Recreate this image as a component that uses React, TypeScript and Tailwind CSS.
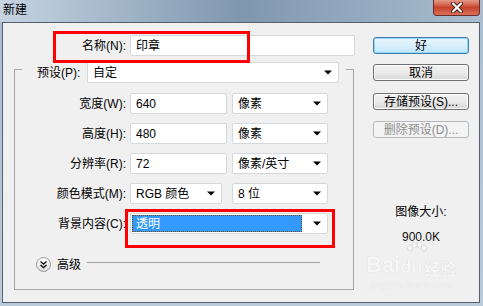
import { ReactNode } from 'react';

const font = "font-['Liberation_Sans','Noto_Sans_CJK_SC',sans-serif]";

function Arrow() {
  return (
    <svg width="8" height="5" viewBox="0 0 8 5" className="shrink-0">
      <path d="M0 0.5h8L4 4.5z" fill="#000" />
    </svg>
  );
}

function Field({ value, w }: { value: string; w: string }) {
  return (
    <div className={`${w} h-[21px] bg-white border border-[#d4d9de] rounded-[2px] flex items-center pl-[5px] text-[12px] text-black`}>
      {value}
    </div>
  );
}

function Select({ value, w, selected }: { value: string; w: string; selected?: boolean }) {
  return (
    <div className={`${w} h-[21px] bg-white border border-[#d4d9de] rounded-[2px] flex items-center pr-[6px] text-[12px] text-black`}>
      {selected ? (
        <div className="flex-1 ml-[1px] mr-[11px] h-[17px] bg-[#3399ff] border border-dotted border-[#7a4a10] flex items-center pl-[3px] text-white">
          {value}
        </div>
      ) : (
        <span className="flex-1 pl-[5px]">{value}</span>
      )}
      <Arrow />
    </div>
  );
}

function Row({ label, children }: { label: string; children: ReactNode }) {
  return (
    <div className="flex items-center h-[21px] mt-[9px] relative">
      <span className="w-[111px] text-right text-[12px] text-black">{label}</span>
      <div className="ml-[4px] flex items-center">{children}</div>
    </div>
  );
}

function Button({ label, primary, disabled }: { label: string; primary?: boolean; disabled?: boolean }) {
  const look = disabled
    ? 'border-[#b5b9bd] bg-[#f4f4f4] text-[#8d8d8d]'
    : primary
      ? 'border-[#3c7fb1] bg-gradient-to-b from-[#eaf6fd] via-[#d9f0fc] to-[#bee6fd] text-black shadow-[inset_0_0_0_1px_#9ad3f5]'
      : 'border-[#707070] bg-gradient-to-b from-[#f2f2f2] via-[#ebebeb] to-[#d6d6d6] text-black shadow-[inset_0_0_0_1px_#fcfcfc]';
  return (
    <div className={`w-[96px] h-[17px] border rounded-[3px] flex items-center justify-center text-[12px] leading-none ${look}`}>
      {label}
    </div>
  );
}

export default function App() {
  return (
    <div className={`w-[483px] h-[306px] overflow-hidden bg-gradient-to-b from-[#a9bdd2] to-[#b9cadb] ${font}`}>
      {/* title bar */}
      <div className="relative h-[22px] bg-gradient-to-r from-[#c6d4e2] via-[#7f97af] to-[#aabdd0] flex items-start">
        <span className="ml-[3px] mt-[3px] text-[12px] leading-[14px] text-black">新建</span>
        <div className="absolute right-[3px] top-0 w-[47px] h-[16px] rounded-b-[4px] border border-t-0 border-[#6e2b20] bg-gradient-to-b from-[#e49a88] via-[#c7432c] to-[#d7705a] flex items-center justify-center">
          <svg width="14" height="11" viewBox="0 0 14 11">
            <path d="M3 1.5l8 8M11 1.5l-8 8" stroke="#4a1a12" strokeWidth="4" strokeLinecap="round" />
            <path d="M3 1.5l8 8M11 1.5l-8 8" stroke="#fff" strokeWidth="2.2" strokeLinecap="round" />
          </svg>
        </div>
      </div>

      {/* client area */}
      <div className="relative ml-[2px] w-[478px] h-[281px] border border-[#55606b] bg-[#f0f0f0] flex">
        {/* left column */}
        <div className="w-[356px] flex flex-col">
          <div className="relative mt-[12px] flex items-center h-[21px]">
            <span className="w-[123px] text-right text-[12px] text-black">名称(N):</span>
            <div className="ml-[4px]">
              <Field value="印章" w="w-[225px]" />
            </div>
            <div className="absolute left-[50px] top-[-4px] w-[197px] h-[32px] border-[3px] border-[#ff0000]" />
          </div>

          {/* group box */}
          <div className="ml-[11px] mt-[13px] w-[340px] h-[221px] border border-[#a9a9a9] flex flex-col">
            <div className="-mt-[8px] ml-[7px] w-[324px] h-[21px] bg-[#f0f0f0] flex items-center">
              <span className="pl-[15px] text-[12px] text-black">预设(P):</span>
              <div className="ml-auto mr-[7px]">
                <Select value="自定" w="w-[252px]" />
              </div>
            </div>
            <div className="mt-[1px]" />
            <Row label="宽度(W):">
              <Field value="640" w="w-[97px]" />
              <div className="ml-[5px]"><Select value="像素" w="w-[96px]" /></div>
            </Row>
            <Row label="高度(H):">
              <Field value="480" w="w-[97px]" />
              <div className="ml-[5px]"><Select value="像素" w="w-[96px]" /></div>
            </Row>
            <Row label="分辨率(R):">
              <Field value="72" w="w-[97px]" />
              <div className="ml-[5px]"><Select value="像素/英寸" w="w-[96px]" /></div>
            </Row>
            <Row label="颜色模式(M):">
              <Select value="RGB 颜色" w="w-[92px]" />
              <div className="ml-[10px]"><Select value="8 位" w="w-[96px]" /></div>
            </Row>
            <Row label="背景内容(C):">
              <Select value="透明" w="w-[198px]" selected />
              <div className="absolute left-[110px] top-[-4px] w-[210px] h-[39px] border-[3px] border-[#ff0000]" />
            </Row>

            {/* advanced */}
            <div className="mt-[23px] h-[15px] flex items-center">
              <div className="ml-[21px] w-[15px] h-[15px] rounded-full border border-[#9a9a9a] bg-gradient-to-b from-white to-[#dcdcdc] flex items-center justify-center">
                <svg width="9" height="9" viewBox="0 0 9 9">
                  <path d="M1.5 1.5l3 2.5 3-2.5M1.5 5l3 2.5 3-2.5" fill="none" stroke="#111" strokeWidth="1.4" />
                </svg>
              </div>
              <span className="ml-[6px] text-[12px] text-black">高级</span>
              <div className="ml-[6px] -mt-[4px] w-[233px] h-px bg-[#a0a0a0]" />
            </div>
          </div>
        </div>

        {/* right column */}
        <div className="ml-[14px] w-[96px] flex flex-col items-center">
          <div className="mt-[14px]"><Button label="好" primary /></div>
          <div className="mt-[10px]"><Button label="取消" /></div>
          <div className="mt-[12px]"><Button label="存储预设(S)..." /></div>
          <div className="mt-[11px]"><Button label="删除预设(D)..." disabled /></div>
          <span className="mt-[67px] text-[12px] leading-[14px] text-black">图像大小:</span>
          <span className="mt-[11px] text-[12px] leading-[14px] text-[#111]">900.0K</span>
        </div>

        {/* watermark */}
        <div className="absolute left-[363px] top-[219px] flex flex-col items-center text-[#f6f6f6] [text-shadow:0_0_1px_#d2d2d2]">
          <svg width="22" height="14" viewBox="0 0 22 14" className="ml-[10px]">
            <g fill="#f7f7f7" stroke="#d6d6d6" strokeWidth="0.8">
              <ellipse cx="5" cy="6" rx="2.5" ry="3" />
              <ellipse cx="9.5" cy="3" rx="2.5" ry="3" />
              <ellipse cx="14.5" cy="3" rx="2.5" ry="3" />
              <ellipse cx="19" cy="6" rx="2.5" ry="3" />
            </g>
          </svg>
          <div className="-mt-[2px] flex items-end leading-none font-bold">
            <span className="text-[22px] font-['Liberation_Sans',sans-serif]">Bai</span>
            <span className="text-[18px] font-['Liberation_Sans',sans-serif]">du</span>
            <span className="ml-[2px] text-[16px] font-['Noto_Sans_CJK_SC',sans-serif]">经验</span>
          </div>
          <span className="mt-[3px] text-[11px] leading-none font-['Liberation_Serif',serif]">jingyan.baidu.com</span>
        </div>
      </div>
    </div>
  );
}
